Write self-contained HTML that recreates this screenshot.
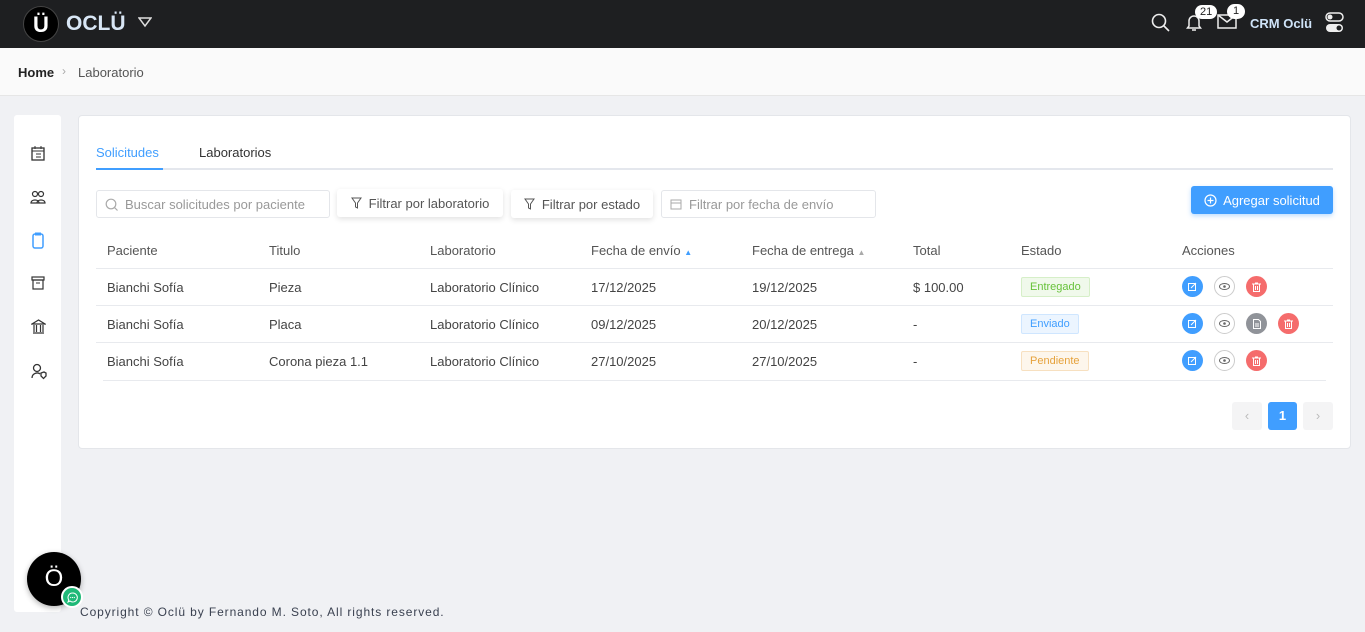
<!DOCTYPE html>
<html><head><meta charset="utf-8"><style>
*{box-sizing:border-box;margin:0;padding:0}
body{width:1365px;height:632px;overflow:hidden;background:#f0f1f4;font-family:"Liberation Sans",sans-serif;color:#333;position:relative;font-size:13px}
.abs{position:absolute}
.hdr{left:0;top:0;width:1365px;height:48px;background:#1e1f21}
.bc{left:0;top:48px;width:1365px;height:48px;background:#fafafa;border-bottom:1px solid #e6e6e6}
.side{left:14px;top:115px;width:47px;height:497px;background:#fff;border-radius:3px}
.card{left:78px;top:115px;width:1273px;height:334px;background:#fff;border:1px solid #e4e6ea;border-radius:4px}
.inp{height:28px;border:1px solid #e4e6ea;border-radius:3px;background:#fff;color:#999;font-size:13px;display:flex;align-items:center;padding-left:8px;gap:7px}
.btn{height:28px;border-radius:3px;background:#fff;box-shadow:0 2px 6px rgba(0,0,0,.12);color:#555;font-size:13px;display:flex;align-items:center;justify-content:center;gap:7px}
.th{top:243px;color:#555;font-size:13px}
.td{color:#444;font-size:13px}
.line{left:103px;width:1223px;height:1px;background:#e8eaee}
.tag{font-size:11px;padding:3px 8px;border-radius:2px;border:1px solid}
.ic{width:21px;height:21px;border-radius:50%;display:flex;align-items:center;justify-content:center}
</style></head><body>
<div class="abs hdr"></div>
<div class="abs" style="left:23px;top:6px;width:36px;height:36px;border-radius:50%;background:#000;border:1px solid #444;color:#fff;font-weight:bold;font-size:22px;text-align:center;line-height:36px">Ü</div>
<div class="abs" style="left:66px;top:12px;color:#d8e6f5;font-weight:bold;font-size:21px">OCLÜ</div>
<svg class="abs" style="left:138px;top:17px" width="14" height="11"><path d="M1 1h12L7 9z" fill="none" stroke="#ddd" stroke-width="1.5"/></svg>
<svg class="abs" style="left:1151px;top:13px" width="19" height="20"><circle cx="8" cy="8" r="6.5" fill="none" stroke="#eee" stroke-width="1.6"/><path d="M13 13l5 5" stroke="#eee" stroke-width="1.6"/></svg>
<svg class="abs" style="left:1186px;top:12px" width="16" height="20"><path d="M3 14V9a5 5 0 0110 0v5l1.5 2h-13z" fill="none" stroke="#eee" stroke-width="1.5"/><path d="M6 18h4" stroke="#eee" stroke-width="1.5"/></svg>
<div class="abs" style="left:1195px;top:5px;background:#fff;color:#222;border-radius:9px;font-size:11px;padding:0 5px;line-height:14px">21</div>
<svg class="abs" style="left:1217px;top:14px" width="20" height="15"><rect x="1" y="1" width="18" height="13" fill="none" stroke="#eee" stroke-width="1.5"/><path d="M1 1l9 7 9-7" fill="none" stroke="#eee" stroke-width="1.5"/></svg>
<div class="abs" style="left:1227px;top:4px;background:#fff;color:#222;border-radius:9px;font-size:11px;padding:0 6px;line-height:15px">1</div>
<div class="abs" style="left:1250px;top:16px;color:#cfe3f8;font-weight:bold;font-size:13px">CRM Oclü</div>
<svg class="abs" style="left:1325px;top:12px" width="19" height="22"><rect x="1" y="1" width="17" height="8" rx="4" fill="none" stroke="#eee" stroke-width="1.5"/><circle cx="5" cy="5" r="2.5" fill="#eee"/><rect x="1" y="12" width="17" height="8" rx="4" fill="#eee"/><circle cx="14" cy="16" r="2.5" fill="#1e1f21"/></svg>
<div class="abs bc"></div>
<div class="abs" style="left:18px;top:65px;font-weight:bold;font-size:13px;color:#222">Home</div>
<div class="abs" style="left:62px;top:64px;color:#aaa;font-size:12px">›</div>
<div class="abs" style="left:78px;top:65px;color:#555;font-size:13px">Laboratorio</div>
<div class="abs side"></div>
<svg class="abs" style="left:31px;top:146px" width="14" height="15"><rect x="1" y="2" width="12" height="12" fill="none" stroke="#333" stroke-width="1.3"/><path d="M1 5h12M4 0v3M10 0v3M5 8h5M5 11h5" stroke="#333"/></svg>
<svg class="abs" style="left:30px;top:190px" width="16" height="14"><circle cx="5" cy="4" r="2.5" fill="none" stroke="#333" stroke-width="1.2"/><circle cx="11" cy="4" r="2.5" fill="none" stroke="#333" stroke-width="1.2"/><path d="M1 13c0-4 8-4 8 0zM7 13c0-4 8-4 8 0z" fill="none" stroke="#333" stroke-width="1.2"/></svg>
<svg class="abs" style="left:32px;top:232px" width="12" height="17"><rect x="1" y="2" width="10" height="14" rx="2" fill="none" stroke="#409eff" stroke-width="1.5"/><rect x="3" y="0.5" width="6" height="3" fill="#409eff"/></svg>
<svg class="abs" style="left:31px;top:276px" width="14" height="14"><rect x="1" y="1" width="12" height="3" fill="none" stroke="#333" stroke-width="1.2"/><rect x="2" y="4" width="10" height="9" fill="none" stroke="#333" stroke-width="1.2"/><path d="M5 7h4" stroke="#333"/></svg>
<svg class="abs" style="left:31px;top:319px" width="15" height="15"><path d="M7.5 1L1 5h13zM2 14h11M3 6v7M5.5 6v7M9.5 6v7M12 6v7" fill="none" stroke="#333" stroke-width="1.2"/></svg>
<svg class="abs" style="left:31px;top:363px" width="16" height="17"><circle cx="6" cy="5" r="3.5" fill="none" stroke="#333" stroke-width="1.3"/><path d="M1 15c0-5 6-6 8-4M10 10l3-1 2 1v3l-2.5 2.5L10 13z" fill="none" stroke="#333" stroke-width="1.3"/></svg>
<div class="abs card"></div>
<div class="abs" style="left:96px;top:145px;color:#409eff;font-size:13px">Solicitudes</div>
<div class="abs" style="left:199px;top:145px;color:#333;font-size:13px">Laboratorios</div>
<div class="abs" style="left:96px;top:168px;width:1237px;height:2px;background:#e4e7ed"></div>
<div class="abs" style="left:96px;top:168px;width:67px;height:2px;background:#409eff"></div>
<div class="abs inp" style="left:96px;top:190px;width:234px"><svg width="13" height="13"><circle cx="6" cy="6" r="4.8" fill="none" stroke="#aaa" stroke-width="1.2"/><path d="M9.5 9.5l3 3" stroke="#aaa" stroke-width="1.2"/></svg>Buscar solicitudes por paciente</div>
<div class="abs btn" style="left:337px;top:189px;width:166px"><svg width="11" height="12"><path d="M1 1h9L6.5 6v5l-2-1V6z" fill="none" stroke="#555"/></svg>Filtrar por laboratorio</div>
<div class="abs btn" style="left:511px;top:190px;width:142px"><svg width="11" height="12"><path d="M1 1h9L6.5 6v5l-2-1V6z" fill="none" stroke="#555"/></svg>Filtrar por estado</div>
<div class="abs inp" style="left:661px;top:190px;width:215px"><svg width="12" height="12"><rect x="1" y="2" width="10" height="9" fill="none" stroke="#aaa"/><path d="M1 5h10" stroke="#aaa"/></svg>Filtrar por fecha de envío</div>
<div class="abs" style="left:1191px;top:186px;width:142px;height:28px;background:#409eff;border-radius:3px;color:#fff;font-size:13px;display:flex;align-items:center;justify-content:center;gap:6px;box-shadow:0 2px 5px rgba(64,158,255,.35)"><svg width="13" height="13"><circle cx="6.5" cy="6.5" r="5.5" fill="none" stroke="#fff" stroke-width="1.2"/><path d="M6.5 3.5v6M3.5 6.5h6" stroke="#fff" stroke-width="1.2"/></svg>Agregar solicitud</div>
<div class="abs th" style="left:107px">Paciente</div>
<div class="abs th" style="left:269px">Titulo</div>
<div class="abs th" style="left:430px">Laboratorio</div>
<div class="abs th" style="left:591px">Fecha de envío <span style="font-size:8px;color:#409eff">▲</span></div>
<div class="abs th" style="left:752px">Fecha de entrega <span style="font-size:8px;color:#aaa">▲</span></div>
<div class="abs th" style="left:913px">Total</div>
<div class="abs th" style="left:1021px">Estado</div>
<div class="abs th" style="left:1182px">Acciones</div>
<div class="abs line" style="top:268px;left:96px;width:1237px"></div>
<div class="abs line" style="top:305px;left:96px;width:1237px"></div>
<div class="abs line" style="top:342px;left:96px;width:1237px"></div>
<div class="abs line" style="top:380px"></div>

<div class="abs td" style="left:107px;top:280px">Bianchi Sofía</div><div class="abs td" style="left:269px;top:280px">Pieza</div><div class="abs td" style="left:430px;top:280px">Laboratorio Clínico</div><div class="abs td" style="left:591px;top:280px">17/12/2025</div><div class="abs td" style="left:752px;top:280px">19/12/2025</div><div class="abs td" style="left:913px;top:280px">$ 100.00</div>
<div class="abs tag" style="left:1021px;top:277px;color:#67c23a;background:#f0f9eb;border-color:#d6efc8">Entregado</div>

<div class="abs td" style="left:107px;top:317px">Bianchi Sofía</div><div class="abs td" style="left:269px;top:317px">Placa</div><div class="abs td" style="left:430px;top:317px">Laboratorio Clínico</div><div class="abs td" style="left:591px;top:317px">09/12/2025</div><div class="abs td" style="left:752px;top:317px">20/12/2025</div><div class="abs td" style="left:913px;top:317px">-</div>
<div class="abs tag" style="left:1021px;top:314px;color:#409eff;background:#ecf5ff;border-color:#cfe6ff">Enviado</div>

<div class="abs td" style="left:107px;top:354px">Bianchi Sofía</div><div class="abs td" style="left:269px;top:354px">Corona pieza 1.1</div><div class="abs td" style="left:430px;top:354px">Laboratorio Clínico</div><div class="abs td" style="left:591px;top:354px">27/10/2025</div><div class="abs td" style="left:752px;top:354px">27/10/2025</div><div class="abs td" style="left:913px;top:354px">-</div>
<div class="abs tag" style="left:1021px;top:351px;color:#e6a23c;background:#fdf6ec;border-color:#f7e0c0">Pendiente</div>

<div class="abs" style="left:1182px;top:276px;display:flex;gap:11px">
<div class="ic" style="background:#409eff"><svg width="9" height="9"><rect x="0.5" y="1.5" width="7" height="7" fill="none" stroke="#fff"/><path d="M3 6l5-5" stroke="#fff"/></svg></div>
<div class="ic" style="border:1px solid #ccc;background:#fff"><svg width="11" height="7"><ellipse cx="5.5" cy="3.5" rx="5" ry="3" fill="none" stroke="#666"/><circle cx="5.5" cy="3.5" r="1.3" fill="#666"/></svg></div>
<div class="ic" style="background:#f56c6c"><svg width="9" height="10"><path d="M0 2h9M3 1h3M1.5 2.5v7h6v-7M3.5 4v4M5.5 4v4" fill="none" stroke="#fff"/></svg></div>
</div>
<div class="abs" style="left:1182px;top:313px;display:flex;gap:11px">
<div class="ic" style="background:#409eff"><svg width="9" height="9"><rect x="0.5" y="1.5" width="7" height="7" fill="none" stroke="#fff"/><path d="M3 6l5-5" stroke="#fff"/></svg></div>
<div class="ic" style="border:1px solid #ccc;background:#fff"><svg width="11" height="7"><ellipse cx="5.5" cy="3.5" rx="5" ry="3" fill="none" stroke="#666"/><circle cx="5.5" cy="3.5" r="1.3" fill="#666"/></svg></div>
<div class="ic" style="background:#909399"><svg width="8" height="10"><path d="M0.5 0.5h5l2 2v7h-7z M2 5h4M2 7h4" fill="none" stroke="#fff"/></svg></div>
<div class="ic" style="background:#f56c6c"><svg width="9" height="10"><path d="M0 2h9M3 1h3M1.5 2.5v7h6v-7M3.5 4v4M5.5 4v4" fill="none" stroke="#fff"/></svg></div>
</div>
<div class="abs" style="left:1182px;top:350px;display:flex;gap:11px">
<div class="ic" style="background:#409eff"><svg width="9" height="9"><rect x="0.5" y="1.5" width="7" height="7" fill="none" stroke="#fff"/><path d="M3 6l5-5" stroke="#fff"/></svg></div>
<div class="ic" style="border:1px solid #ccc;background:#fff"><svg width="11" height="7"><ellipse cx="5.5" cy="3.5" rx="5" ry="3" fill="none" stroke="#666"/><circle cx="5.5" cy="3.5" r="1.3" fill="#666"/></svg></div>
<div class="ic" style="background:#f56c6c"><svg width="9" height="10"><path d="M0 2h9M3 1h3M1.5 2.5v7h6v-7M3.5 4v4M5.5 4v4" fill="none" stroke="#fff"/></svg></div>
</div>

<div class="abs" style="left:1232px;top:402px;width:30px;height:28px;background:#f4f4f5;border-radius:3px;color:#bbb;text-align:center;line-height:28px">‹</div>
<div class="abs" style="left:1268px;top:402px;width:29px;height:28px;background:#409eff;border-radius:3px;color:#fff;font-weight:bold;text-align:center;line-height:28px">1</div>
<div class="abs" style="left:1303px;top:402px;width:30px;height:28px;background:#f4f4f5;border-radius:3px;color:#bbb;text-align:center;line-height:28px">›</div>

<div class="abs" style="left:27px;top:552px;width:54px;height:54px;border-radius:50%;background:#000;color:#fff;font-size:24px;text-align:center;line-height:54px;box-shadow:0 2px 6px rgba(0,0,0,.3)">Ö</div>
<div class="abs" style="left:61px;top:586px;width:22px;height:22px;border-radius:50%;background:#1fb978;border:2px solid #fff;display:flex;align-items:center;justify-content:center"><svg width="11" height="11"><path d="M5.5 1a4.5 4.5 0 11-2.5 8L1 10l.8-2A4.5 4.5 0 015.5 1z" fill="none" stroke="#fff"/><circle cx="3.7" cy="5.5" r=".6" fill="#fff"/><circle cx="5.5" cy="5.5" r=".6" fill="#fff"/><circle cx="7.3" cy="5.5" r=".6" fill="#fff"/></svg></div>
<div class="abs" style="left:80px;top:605px;color:#3a4150;font-size:12px;letter-spacing:.9px">Copyright © Oclü by Fernando M. Soto, All rights reserved.</div>
</body></html>
